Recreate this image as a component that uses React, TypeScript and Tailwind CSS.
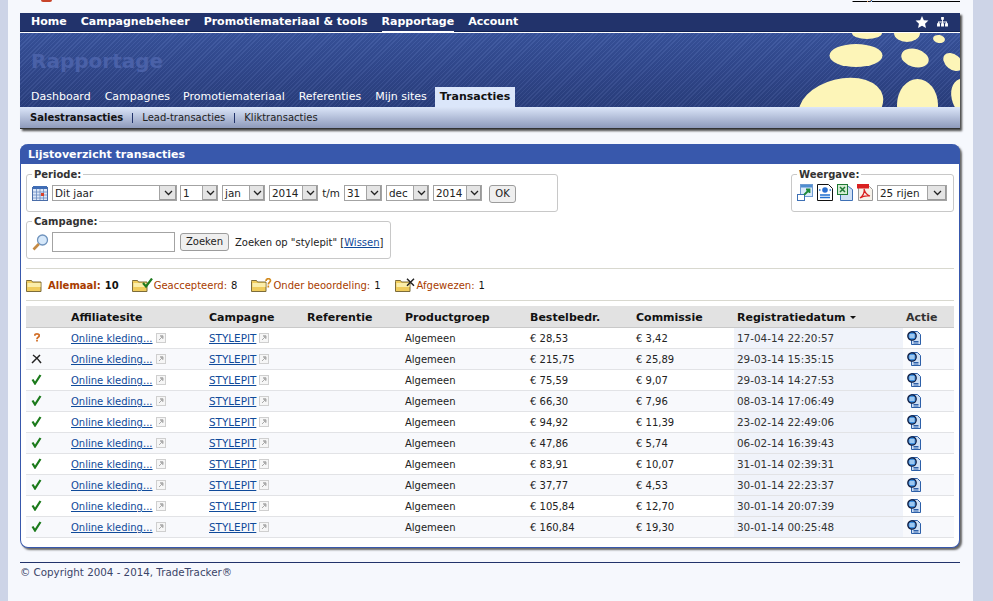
import React from "react";

const font = { fontFamily: '"DejaVu Sans", Verdana, sans-serif' };

function Sel({ label, w, arrow = 15 }: { label: string; w: number; arrow?: number }) {
  return (
    <div style={{ width: w }} className="flex h-[16px] shrink-0 border border-[#a3a3a3] bg-white text-[10.4px] leading-[14px] text-[#222]">
      <span className="flex-1 overflow-hidden whitespace-nowrap pl-[2px]">{label}</span>
      <span style={{ width: arrow }} className="flex shrink-0 items-center justify-center border-l border-[#a3a3a3] bg-[#e4e4e4] shadow-[inset_-1px_-1px_0_#9a9a9a]">
        <svg width="9" height="6" viewBox="0 0 9 6"><path d="M1 1l3.500 3.500L8 1" fill="none" stroke="#222" strokeWidth="1.300" /></svg>
      </span>
    </div>
  );
}

function Btn({ children, w }: { children: React.ReactNode; w: number }) {
  return (
    <div style={{ width: w }} className="h-[18px] shrink-0 rounded-[3px] border border-[#9c9c9c] bg-[#efefef] text-center text-[10px] leading-[16px] text-[#222]">
      {children}
    </div>
  );
}

function Legend({ children }: { children: React.ReactNode }) {
  return <legend className="px-[2px] text-[10px] font-bold leading-[11px] text-[#333]">{children}</legend>;
}

function Folder({ mark }: { mark?: "check" | "q" | "x" }) {
  return (
    <svg width="22" height="15" viewBox="0 0 22 15" className="shrink-0">
      <path d="M.5 3.500V2.500h5l1 1.500h8.500v9.500H.5z" fill="#f0cc5c" stroke="#7d6c3a" />
      <rect x="1.500" y="5" width="13" height="4" fill="#fbeeaa" />
      {mark === "check" && <path d="M11 5l3 3.500L20 .5" fill="none" stroke="#1f7a1f" strokeWidth="2.200" />}
      {mark === "q" && <path d="M15 3c0-3 4.500-3 4.500-.5 0 2-2.200 1.800-2.200 4M17.300 7.500v2" fill="none" stroke="#d28a1e" strokeWidth="1.700" />}
      {mark === "x" && <path d="M12 .8l7 7M19 .8l-7 7" fill="none" stroke="#222" strokeWidth="1.500" />}
    </svg>
  );
}

function Ext() {
  return (
    <svg width="10" height="10" viewBox="0 0 10 10" className="-mt-[1px] inline-block shrink-0">
      <rect x=".5" y=".5" width="9" height="9" fill="#f6f6f6" stroke="#cfcfcf" />
      <path d="M3 7l3-3M4.200 2.800h2.800v2.800z" stroke="#aaa" strokeWidth="1" fill="#aaa" />
    </svg>
  );
}

function ActionIcon() {
  return (
    <svg width="14" height="14" viewBox="0 0 14 14" className="mt-[1px] block">
      <path d="M4.500.5h6l3 3v10h-9z" fill="#cfe0f5" stroke="#2c5fa8" />
      <path d="M6.500 10.500h5M6.500 12h5" stroke="#2c5fa8" />
      <circle cx="5" cy="5" r="4.200" fill="#3d8fe0" stroke="#101c40" strokeWidth="1.300" />
      <path d="M2.500 4h5M2.500 6h5" stroke="#fff" />
    </svg>
  );
}

function Status({ s }: { s: "q" | "x" | "c" }) {
  if (s === "q")
    return (
      <svg width="6" height="11" viewBox="0 0 8 11"><path d="M1 3c0-3 6-3 6 0 0 2.200-3 2-3 4.500M4 8.500v2.300" fill="none" stroke="#d2702a" strokeWidth="2.400" /></svg>
    );
  if (s === "x")
    return (
      <svg width="11" height="10" viewBox="0 0 11 10"><path d="M1 9l8-8M2 1c3 2 6 5 8 8" fill="none" stroke="#222" strokeWidth="1.500" /></svg>
    );
  return (
    <svg width="11" height="11" viewBox="0 0 11 11"><path d="M1.500 5.500l2.500 4L9.500 1" fill="none" stroke="#1b7a1b" strokeWidth="2.200" /></svg>
  );
}

const rows: ["q" | "x" | "c", string, string, string][] = [
  ["q", "€ 28,53", "€ 3,42", "17-04-14 22:20:57"],
  ["x", "€ 215,75", "€ 25,89", "29-03-14 15:35:15"],
  ["c", "€ 75,59", "€ 9,07", "29-03-14 14:27:53"],
  ["c", "€ 66,30", "€ 7,96", "08-03-14 17:06:49"],
  ["c", "€ 94,92", "€ 11,39", "23-02-14 22:49:06"],
  ["c", "€ 47,86", "€ 5,74", "06-02-14 16:39:43"],
  ["c", "€ 83,91", "€ 10,07", "31-01-14 02:39:31"],
  ["c", "€ 37,77", "€ 4,53", "30-01-14 22:23:37"],
  ["c", "€ 105,84", "€ 12,70", "30-01-14 20:07:39"],
  ["c", "€ 160,84", "€ 19,30", "30-01-14 00:25:48"],
];

const linkCls = "text-[#0f4a9a] underline";
const cell = "pt-[2px] leading-[15px]";

export default function App() {
  return (
    <div style={font} className="h-[601px] w-[993px] overflow-hidden bg-[#cdd4e7]">
      <div className="ml-[8px] h-full w-[965px] bg-[#f6f8fd] pl-[12px] pr-[13px]">
        {/* clipped top line */}
        <div className="h-[13px]">
          <div className="flex h-[4px] items-end justify-between overflow-hidden">
            <div className="mb-[2px] ml-[21px] h-[2px] w-[11px] rounded-b-full bg-[#c8442a]" />
            <a className="text-[10px] leading-[14px] text-black underline">Uitgebreid selecteren</a>
          </div>
        </div>

        {/* header */}
        <div className="shadow-[2px_2px_2px_#4a4a4a]">
          <div className="flex h-[20px] items-start justify-between bg-[#22336b] pl-[11px] pr-[12px] shadow-[inset_0_-1px_0_#fff,inset_0_-2px_0_#10204f]">
            <div className="flex gap-[14px] text-[11px] font-bold leading-[18px] text-white">
              <span>Home</span>
              <span>Campagnebeheer</span>
              <span>Promotiemateriaal &amp; tools</span>
              <span className="h-[20px] border-b-2 border-white">Rapportage</span>
              <span>Account</span>
            </div>
            <div className="flex h-[18px] items-center gap-[8px]">
              <svg width="14" height="12" viewBox="0 0 14 13"><path d="M7 0l2 4.500 5 .5-3.700 3.300L11.300 13 7 10.500 2.700 13l1-4.700L0 5l5-.5z" fill="#fff" /></svg>
              <svg width="11" height="10" viewBox="0 0 12 11"><path d="M4.500 0h3v3h-3zM0 7h3.200v3.500H0zM4.400 7h3.200v3.500H4.400zM8.800 7H12v3.500H8.800zM5.500 3h1v2H11v2h-1V6H6.500v1h-1V6H2v1H1V5h4.500z" fill="#fff" /></svg>
            </div>
          </div>
          <div className="relative flex h-[74px] flex-col justify-between overflow-hidden bg-[#2f4793] bg-[repeating-linear-gradient(135deg,rgba(255,255,255,0.05)_0px,rgba(255,255,255,0.05)_1px,rgba(0,0,0,0.05)_1px,rgba(0,0,0,0.05)_3px),linear-gradient(to_bottom,#39549f,#2a3f80)]">
            <svg className="absolute right-0 top-0" width="170" height="74" viewBox="790 33 170 74">
              <g fill="#fdf5b8">
                <ellipse cx="867" cy="33" rx="15" ry="6" />
                <ellipse cx="907" cy="33" rx="13" ry="9" />
                <ellipse cx="939" cy="39" rx="6" ry="4" transform="rotate(10 939 39)" />
                <ellipse cx="856" cy="55.500" rx="26.500" ry="11.500" />
                <ellipse cx="915" cy="58" rx="14" ry="9" transform="rotate(15 915 58)" />
                <ellipse cx="953" cy="62" rx="11" ry="7.500" transform="rotate(40 953 62)" />
                <ellipse cx="841" cy="106" rx="43" ry="27" transform="rotate(-14 841 106)" />
                <ellipse cx="917.500" cy="105" rx="20.500" ry="26" />
                <ellipse cx="966" cy="98" rx="14" ry="20" transform="rotate(-20 966 98)" />
              </g>
            </svg>
            <div className="relative ml-[11px] mt-[13px] text-[20px] font-bold leading-[30px] text-[#4a61a8]">Rapportage</div>
            <div className="relative flex items-end pl-[11px] text-[11px] leading-[20px] text-white">
              <span className="mr-[14px]">Dashboard</span>
              <span className="mr-[13px]">Campagnes</span>
              <span className="mr-[14px]">Promotiemateriaal</span>
              <span className="mr-[14px]">Referenties</span>
              <span className="mr-[8px]">Mijn sites</span>
              <span className="bg-[#dbe6fa] px-[5px] font-bold text-[#111]">Transacties</span>
            </div>
          </div>
          <div className="flex h-[22px] items-center border-b border-[#333] bg-gradient-to-b from-[#dce6f9] to-[#8e9abb] pl-[10px] text-[10px] leading-[20px] text-[#222]">
            <span className="font-bold text-[#111]">Salestransacties</span>
            <span className="mx-[9px] h-[10px] w-px bg-[#22336b]" />
            <span>Lead-transacties</span>
            <span className="mx-[9px] h-[10px] w-px bg-[#22336b]" />
            <span>Kliktransacties</span>
          </div>
        </div>

        {/* card */}
        <div className="mt-[15px] h-[404px] rounded-[8px] border-x border-b border-[#3858ac] bg-white shadow-[2px_2px_2px_#666]">
          <div className="-mx-px h-[20px] rounded-t-[8px] bg-[#3858ac] pl-[8px] text-[11px] font-bold leading-[21px] text-white">
            Lijstoverzicht transacties
          </div>
          <div className="px-[5px]">
            <div className="mt-[5px] flex justify-between">
              <div>
                <fieldset className="h-[43px] w-[532px] rounded-[3px] border border-[#c8c8c8] pl-[5px]">
                  <Legend>Periode:</Legend>
                  <div className="mt-[5px] flex items-start">
                    <svg width="16" height="16" viewBox="0 0 16 16" className="mr-[4px] shrink-0">
                      <rect x=".5" y="2.500" width="15" height="13" fill="#dce7f7" stroke="#4a6da8" />
                      <rect x="1" y="1" width="14" height="3" fill="#3f6db5" />
                      <path d="M1 7h14M1 10h14M1 13h14M4.500 4v11M8 4v11M11.500 4v11" stroke="#6a8cc0" strokeWidth=".8" />
                      <rect x="9" y="8" width="3" height="3" fill="#d8402a" />
                    </svg>
                    <Sel label="Dit jaar" w={125} arrow={17} />
                    <div className="w-[3px]" />
                    <Sel label="1" w={38} />
                    <div className="w-[4px]" />
                    <Sel label="jan" w={43} />
                    <div className="w-[4px]" />
                    <Sel label="2014" w={49} />
                    <span className="w-[26px] text-center text-[10.4px] leading-[16px] text-[#222]">t/m</span>
                    <Sel label="31" w={38} />
                    <div className="w-[4px]" />
                    <Sel label="dec" w={43} />
                    <div className="w-[4px]" />
                    <Sel label="2014" w={49} />
                    <div className="w-[7px]" />
                    <Btn w={27}>OK</Btn>
                  </div>
                </fieldset>
                <fieldset className="mt-[4px] h-[43px] w-[365px] rounded-[3px] border border-[#c8c8c8] pl-[5px]">
                  <Legend>Campagne:</Legend>
                  <div className="mt-[5px] flex items-center">
                    <svg width="17" height="17" viewBox="0 0 17 17" className="mr-[3px] shrink-0">
                      <circle cx="10.500" cy="6" r="5" fill="#d6e8fa" stroke="#6f93bd" strokeWidth="1.300" />
                      <path d="M6.800 10L1.500 15.500" stroke="#c58a44" strokeWidth="2.600" />
                    </svg>
                    <div className="h-[20px] w-[123px] shrink-0 border border-[#a3a3a3] bg-white" />
                    <div className="w-[5px]" />
                    <Btn w={49}>Zoeken</Btn>
                    <span className="ml-[6px] whitespace-nowrap text-[10px] text-[#222]">
                      Zoeken op "stylepit" [<a className={linkCls}>Wissen</a>]
                    </span>
                  </div>
                </fieldset>
              </div>
              <fieldset className="h-[43px] w-[163px] rounded-[3px] border border-[#c8c8c8] pl-[5px]">
                <Legend>Weergave:</Legend>
                <div className="mt-[4px] flex items-center gap-[4px]">
                  <svg width="16" height="17" viewBox="0 0 16 17" className="shrink-0">
                    <rect x="3.500" y=".5" width="12" height="12" fill="#dbe9fa" stroke="#6f9bd2" />
                    <rect x="4" y="1" width="11" height="2.500" fill="#4f8ed0" />
                    <rect x=".5" y="10.500" width="7" height="6" fill="#fff" stroke="#3e70b5" />
                    <path d="M7 11l5-5M9 5.500h3.500V9" fill="none" stroke="#1f8a3a" strokeWidth="1.800" />
                  </svg>
                  <svg width="16" height="17" viewBox="0 0 16 17" className="shrink-0">
                    <path d="M.5.5h11l4 4v12H.5z" fill="#fff" stroke="#111" />
                    <circle cx="8" cy="6" r="2.800" fill="#2a6fd0" />
                    <path d="M2 6h1.500M12.500 6H14M3 11h10M3 13.500h10" stroke="#1f6fd0" strokeWidth="1.300" />
                  </svg>
                  <svg width="16" height="17" viewBox="0 0 16 17" className="shrink-0">
                    <path d="M3.500 2.500h8l4 3v11h-12z" fill="#cfe0f5" stroke="#3e70b5" />
                    <rect x=".5" y=".5" width="10" height="10" fill="#d5ecd5" stroke="#1f7a35" />
                    <path d="M3 3l5 5M8 3L3 8" stroke="#1f7a35" strokeWidth="1.500" />
                  </svg>
                  <svg width="16" height="17" viewBox="0 0 16 17" className="shrink-0">
                    <path d="M1.500 2.500h11l3 3v11h-14z" fill="#f6f2ea" stroke="#999" />
                    <rect x="0" y="0" width="12" height="4.500" fill="#d92020" />
                    <path d="M3 14c3-2 5-6 4-9 1 4 3 6 6 7-3-.5-7 0-10 2z" fill="none" stroke="#d92020" strokeWidth="1.200" />
                  </svg>
                  <Sel label="25 rijen" w={70} arrow={19} />
                </div>
              </fieldset>
            </div>

            <div className="mt-[9px] flex h-[33px] items-center border-y border-[#d8d8cf] pt-[2px] text-[10px] leading-[14px] text-[#111]">
              <Folder />
              <span className="font-bold text-[#a83c00]">Allemaal:</span>
              <span className="ml-[4px] font-bold">10</span>
              <div className="w-[13px]" />
              <Folder mark="check" />
              <span className="text-[#a83c00]">Geaccepteerd:</span>
              <span className="ml-[4px]">8</span>
              <div className="w-[14px]" />
              <Folder mark="q" />
              <span className="text-[#a83c00]">Onder beoordeling:</span>
              <span className="ml-[4px]">1</span>
              <div className="w-[14px]" />
              <Folder mark="x" />
              <span className="text-[#a83c00]">Afgewezen:</span>
              <span className="ml-[4px]">1</span>
            </div>

            <table className="mt-[5px] w-[928px] table-fixed border-collapse text-[10px] text-[#222]">
              <colgroup>
                <col className="w-[45px]" />
                <col className="w-[138px]" />
                <col className="w-[98px]" />
                <col className="w-[98px]" />
                <col className="w-[125px]" />
                <col className="w-[106px]" />
                <col className="w-[98px]" />
                <col className="w-[169px]" />
                <col className="w-[51px]" />
              </colgroup>
              <thead>
                <tr className="h-[21px] border-b border-[#c9c9c9] bg-[#e2e2e2] text-left text-[11px] text-[#111]">
                  <th />
                  <th className={`font-bold ${cell}`}>Affiliatesite</th>
                  <th className={`font-bold ${cell}`}>Campagne</th>
                  <th className={`font-bold ${cell}`}>Referentie</th>
                  <th className={`font-bold ${cell}`}>Productgroep</th>
                  <th className={`font-bold ${cell}`}>Bestelbedr.</th>
                  <th className={`font-bold ${cell}`}>Commissie</th>
                  <th className={`pl-[3px] font-bold ${cell}`}>
                    Registratiedatum <span className="ml-[1px] inline-block h-0 w-0 border-x-[3px] border-t-[3px] border-x-transparent border-t-[#111] align-middle" />
                  </th>
                  <th className={`pl-[3px] font-bold text-[#333] ${cell}`}>Actie</th>
                </tr>
              </thead>
              <tbody>
                {rows.map((r, i) => (
                  <tr key={i} className={`h-[21px] border-b border-[#e2e3e6] ${i % 2 ? "bg-[#f8f9fc]" : "bg-white"}`}>
                    <td className="pl-[5px]">
                      <span className="flex w-[11px] justify-center">
                        <Status s={r[0]} />
                      </span>
                    </td>
                    <td className={cell}>
                      <span className="flex items-center gap-[3px]">
                        <a className={linkCls}>Online kleding...</a>
                        <Ext />
                      </span>
                    </td>
                    <td className={cell}>
                      <span className="flex items-center gap-[3px]">
                        <a className={`${linkCls} text-[10.400px]`}>STYLEPIT</a>
                        <Ext />
                      </span>
                    </td>
                    <td />
                    <td className={cell}>Algemeen</td>
                    <td className={cell}>{r[1]}</td>
                    <td className={cell}>{r[2]}</td>
                    <td className={`bg-[#f0f3fa] pl-[3px] text-[10.400px] text-[#333] ${cell}`}>{r[3]}</td>
                    <td className="pl-[4px]">
                      <ActionIcon />
                    </td>
                  </tr>
                ))}
              </tbody>
            </table>
          </div>
        </div>

        {/* footer */}
        <div className="mt-[14px] border-t border-[#22336b] pt-[1px] text-[10.300px] leading-[16px] text-[#3a4468]">
          © Copyright 2004 - 2014, TradeTracker®
        </div>
      </div>
    </div>
  );
}
